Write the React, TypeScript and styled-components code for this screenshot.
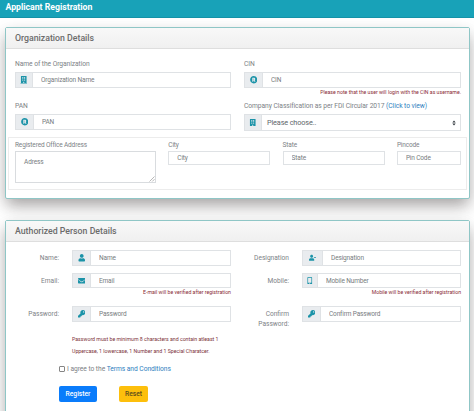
import React from "react";
import styled, { createGlobalStyle } from "styled-components";
import { FaBuilding, FaRegistered, FaUser, FaUserMinus, FaEnvelope, FaMobileAlt, FaKey } from "react-icons/fa";

const GlobalStyle = createGlobalStyle`
  * { box-sizing: border-box; }
  html, body { margin: 0; height: 100%; overflow: hidden; }
  body { background: #fff; font-family: Roboto, sans-serif; color: #7d8286; }
  input, textarea, button, select { font-family: inherit; }
`;

const Page = styled.div`
  height: 411px;
  overflow: hidden;
`;

const TopBar = styled.header`
  height: 18px;
  padding: 0 5.5px;
  background: #18a2b8;
  border-bottom: 1px solid #1593a8;
  color: #fff;
  font-size: 8.7px;
  font-weight: 700;
  line-height: 15px;
`;

const Card = styled.section<{ $height: number; $gap: number }>`
  margin: ${(p) => p.$gap}px 4px 0 5px;
  height: ${(p) => p.$height}px;
  border: 1px solid #8fc6c6;
  border-radius: 2px;
  background: #fff;
  box-shadow: 0 8px 14px -2px rgba(30, 20, 20, 0.3), 0 6px 18px rgba(0, 0, 0, 0.12);
`;

const CardHeader = styled.h2`
  margin: 0;
  height: 21px;
  padding-left: 9px;
  border-bottom: 1px solid #dedede;
  background: linear-gradient(#f8f8f8, #f0f0f0);
  color: #6b6b6b;
  font-size: 8.75px;
  font-weight: 500;
  line-height: 20px;
`;

const TwoColumns = styled.div`
  display: grid;
  grid-template-columns: 216px 217px;
  column-gap: 13px;
  padding: 0 9px;
  height: 88px;
`;

const Label = styled.label<{ $height?: number; $size?: number; $tracking?: number }>`
  display: block;
  height: ${(p) => p.$height ?? 12}px;
  line-height: ${(p) => p.$height ?? 12}px;
  font-size: ${(p) => p.$size ?? 6.7}px;
  letter-spacing: ${(p) => p.$tracking ?? -0.06}px;
  white-space: nowrap;
`;

const SmallLabel = styled(Label).attrs({ $size: 6.5, $tracking: -0.14 })``;

const Field = styled.div<{ $top: number }>`
  padding-top: ${(p) => p.$top}px;
`;

const Group = styled.div<{ $height?: number }>`
  display: flex;
  height: ${(p) => p.$height ?? 16}px;
  border: 1px solid #dfe2e5;
  background: #fff;
`;

const Addon = styled.span<{ $width: number }>`
  flex: none;
  display: flex;
  align-items: center;
  justify-content: center;
  width: ${(p) => p.$width}px;
  border-right: 1px solid #dfe2e5;
  background: #e9ecef;
  color: #1b93a8;
  font-size: 7.5px;
`;

const Input = styled.input`
  display: block;
  flex: 1;
  min-width: 0;
  width: 100%;
  border: 0;
  padding: 0 8px;
  background: transparent;
  outline: 0;
  font-size: 6.5px;
  letter-spacing: -0.14px;
  color: #666;
  &::placeholder { color: #777c80; opacity: 1; }
`;

const BoxedInput = styled(Input)`
  height: 14px;
  border: 1px solid #dfe2e5;
`;

const SelectFace = styled.button`
  flex: 1;
  display: flex;
  align-items: center;
  justify-content: space-between;
  border: 0;
  padding: 0 4px 0 5px;
  background: #fff;
  color: #62676c;
  font-size: 7.3px;
  letter-spacing: -0.14px;
`;

const Note = styled.div`
  height: 8px;
  line-height: 9px;
  font-size: 5.2px;
  color: #8a2c35;
  text-align: right;
  white-space: nowrap;
`;

const Link = styled.a`
  color: #2f7fc0;
`;

const AddressPanel = styled.div`
  display: grid;
  grid-template-columns: 141px 102px 102px 64px;
  column-gap: 12.3px;
  margin: 0 2px;
  height: 53px;
  padding: 1px 6px 0;
  border: 1px solid #ececec;
`;

const TextArea = styled.textarea`
  display: block;
  width: 100%;
  height: 32px;
  padding: 6px 8px;
  border: 1px solid #d9dcdf;
  font-size: 6.5px;
  letter-spacing: -0.1px;
  outline: 0;
  resize: none;
  &::placeholder { color: #777c80; opacity: 1; }
`;

const AreaWrap = styled.div`
  position: relative;
`;

const Grip = styled.svg`
  position: absolute;
  right: 1px;
  bottom: 1px;
`;

const PersonRow = styled.div<{ $height: number }>`
  display: grid;
  grid-template-columns: 46px 159px 45px 159px;
  column-gap: 13px;
  padding-left: 7px;
  height: ${(p) => p.$height}px;
`;

const SideLabel = styled.label`
  padding-top: 3px;
  font-size: 6.6px;
  line-height: 10px;
  text-align: right;
`;

const Rules = styled.p`
  margin: 0 0 0 66px;
  font-size: 5.22px;
  line-height: 12px;
  color: #7b3038;
`;

const Agreement = styled.label`
  display: flex;
  align-items: center;
  gap: 2px;
  height: 10px;
  margin: 7px 0 0 53px;
  font-size: 6.7px;
  letter-spacing: -0.05px;
`;

const Checkbox = styled.input`
  appearance: none;
  width: 6px;
  height: 6px;
  margin: 0;
  border: 1px solid #858585;
  border-radius: 1px;
  background: #fff;
`;

const Actions = styled.div`
  display: flex;
  gap: 22px;
  margin: 12px 0 0 53px;
`;

const Button = styled.button<{ $width: number; $bg: string; $fg: string }>`
  width: ${(p) => p.$width}px;
  height: 16px;
  padding: 0;
  border: 0;
  border-radius: 2px;
  background: ${(p) => p.$bg};
  color: ${(p) => p.$fg};
  font-size: 6.7px;
  font-weight: 500;
`;

type IconFieldProps = { icon: React.ReactNode; addon: number; hint: string; height?: number; type?: string };

const IconField = ({ icon, addon, hint, height, type }: IconFieldProps) => (
  <Group $height={height}>
    <Addon $width={addon}>{icon}</Addon>
    <Input placeholder={hint} type={type ?? "text"} />
  </Group>
);

export default function App() {
  return (
    <Page>
      <GlobalStyle />
      <TopBar>Applicant Registration</TopBar>

      <Card $gap={9} $height={172}>
        <CardHeader>Organization Details</CardHeader>
        <TwoColumns>
          <div>
            <Field $top={8}>
              <Label $height={15}>Name of the Organization</Label>
              <IconField icon={<FaBuilding />} addon={17} hint="Organization Name" />
            </Field>
            <Field $top={10}>
              <Label $height={16}>PAN</Label>
              <IconField icon={<FaRegistered />} addon={18} hint="PAN" />
            </Field>
          </div>
          <div>
            <Field $top={8}>
              <Label $height={15}>CIN</Label>
              <IconField icon={<FaRegistered />} addon={18} hint="CIN" />
              <Note>Please note that the user will login with the CIN as username.</Note>
            </Field>
            <Field $top={2}>
              <Label $height={16}>
                Company Classification as per FDI Circular 2017 <Link>(Click to view)</Link>
              </Label>
              <Group $height={17}>
                <Addon $width={17}><FaBuilding /></Addon>
                <SelectFace>
                  <span>Please choose..</span>
                  <svg width="4" height="6" viewBox="0 0 4 6">
                    <path d="M.3 2.6 2 .4l1.7 2.2zM.3 3.4 2 5.6l1.7-2.2z" fill="#343a40" />
                  </svg>
                </SelectFace>
              </Group>
            </Field>
          </div>
        </TwoColumns>
        <AddressPanel>
          <div>
            <SmallLabel>Registered Office Address</SmallLabel>
            <AreaWrap>
              <TextArea placeholder="Adress" />
              <Grip width="6" height="6" viewBox="0 0 6 6">
                <path d="M.5 5.5l5-5M3.2 5.5l2.3-2.3" stroke="#9a9a9a" strokeWidth=".7" />
              </Grip>
            </AreaWrap>
          </div>
          <div>
            <SmallLabel>City</SmallLabel>
            <BoxedInput placeholder="City" />
          </div>
          <div>
            <SmallLabel>State</SmallLabel>
            <BoxedInput placeholder="State" />
          </div>
          <div>
            <SmallLabel>Pincode</SmallLabel>
            <BoxedInput placeholder="Pin Code" />
          </div>
        </AddressPanel>
      </Card>

      <Card $gap={21} $height={215}>
        <CardHeader>Authorized Person Details</CardHeader>
        <PersonRow $height={8} />
        <PersonRow $height={23}>
          <SideLabel>Name:</SideLabel>
          <IconField icon={<FaUser />} addon={18} hint="Name" />
          <SideLabel>Designation</SideLabel>
          <IconField icon={<FaUserMinus />} addon={20} hint="Designation" />
        </PersonRow>
        <PersonRow $height={33}>
          <SideLabel>Email:</SideLabel>
          <div>
            <IconField icon={<FaEnvelope />} addon={18} hint="Email" height={15} />
            <Note>E-mail will be verified after registration</Note>
          </div>
          <SideLabel>Mobile:</SideLabel>
          <div>
            <IconField icon={<FaMobileAlt />} addon={15} hint="Mobile Number" height={15} />
            <Note>Mobile will be verified after registration</Note>
          </div>
        </PersonRow>
        <PersonRow $height={27}>
          <SideLabel>Password:</SideLabel>
          <IconField icon={<FaKey />} addon={18} hint="Password" type="password" />
          <SideLabel>Confirm Password:</SideLabel>
          <IconField icon={<FaKey />} addon={18} hint="Confirm Password" type="password" />
        </PersonRow>
        <Rules>
          Password must be minimum 8 characters and contain atleast 1
          <br />
          Uppercase, 1 lowercase, 1 Number and 1 Special Charatcer.
        </Rules>
        <Agreement>
          <Checkbox type="checkbox" />
          <span>I agree to the <Link>Terms and Conditions</Link></span>
        </Agreement>
        <Actions>
          <Button $width={38} $bg="#0a7cfb" $fg="#fff">Register</Button>
          <Button $width={29} $bg="#fdbf0c" $fg="#5c4a1c">Reset</Button>
        </Actions>
      </Card>
    </Page>
  );
}
